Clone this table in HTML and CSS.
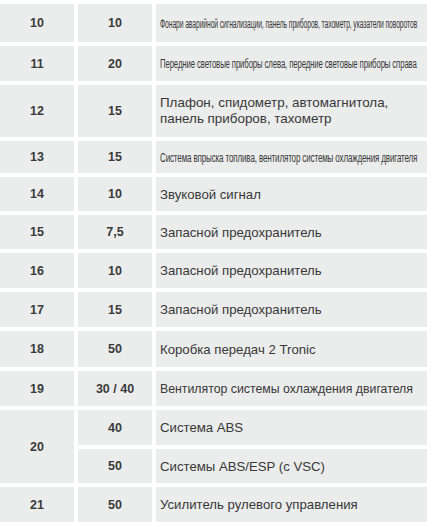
FILE: index.html
```html
<!DOCTYPE html>
<html lang="ru">
<head>
<meta charset="utf-8">
<title>Предохранители</title>
<link rel="stylesheet" href="styles.css">
</head>
<body>
<table class="fuses">
  <colgroup>
    <col class="c-num">
    <col class="c-amp">
    <col class="c-desc">
  </colgroup>
  <tbody>
    <tr class="h38"><td class="num">10</td><td class="num">10</td><td class="desc"><span class="squeeze">Фонари аварийной сигнализации, панель приборов, тахометр, указатели поворотов</span></td></tr>
    <tr class="h35"><td class="num">11</td><td class="num">20</td><td class="desc"><span class="squeeze">Передние световые приборы слева, передние световые приборы справа</span></td></tr>
    <tr class="h52"><td class="num">12</td><td class="num">15</td><td class="desc big">Плафон, спидометр, автомагнитола,<br>панель приборов, тахометр</td></tr>
    <tr class="h32"><td class="num">13</td><td class="num">15</td><td class="desc"><span class="squeeze">Система впрыска топлива, вентилятор системы охлаждения двигателя</span></td></tr>
    <tr class="h34"><td class="num">14</td><td class="num">10</td><td class="desc">Звуковой сигнал</td></tr>
    <tr class="h34"><td class="num">15</td><td class="num">7,5</td><td class="desc">Запасной предохранитель</td></tr>
    <tr class="h35"><td class="num">16</td><td class="num">10</td><td class="desc">Запасной предохранитель</td></tr>
    <tr class="h35"><td class="num">17</td><td class="num">15</td><td class="desc">Запасной предохранитель</td></tr>
    <tr class="h36"><td class="num">18</td><td class="num">50</td><td class="desc">Коробка передач 2 Tronic</td></tr>
    <tr class="h35"><td class="num">19</td><td class="num">30 / 40</td><td class="desc narrow">Вентилятор системы охлаждения двигателя</td></tr>
    <tr class="h35"><td class="num" rowspan="2">20</td><td class="num">40</td><td class="desc">Система ABS</td></tr>
    <tr class="h34"><td class="num">50</td><td class="desc">Системы ABS/ESP (с VSC)</td></tr>
    <tr class="h35"><td class="num">21</td><td class="num">50</td><td class="desc">Усилитель рулевого управления</td></tr>
  </tbody>
</table>
<script src="fit.js"></script>
</body>
</html>
```

FILE: styles.css
```css
html, body {
  margin: 0;
  padding: 0;
  background: #ffffff;
  overflow: hidden;
}

body {
  width: 427px;
  height: 522px;
  font-family: "Liberation Sans", Arial, sans-serif;
  color: #383838;
}

.fuses {
  table-layout: fixed;
  border-collapse: separate;
  border-spacing: 4px;
  width: 440px;
  margin: 0 0 0 -4px;
}

.c-num { width: 74px; }
.c-amp { width: 74px; }

.fuses td {
  background: #ebecec;
  padding: 0;
  vertical-align: middle;
}

.num {
  text-align: center;
  font-weight: bold;
  font-size: 12.5px;
  color: #3a3a3a;
}

.desc {
  font-size: 13.2px;
  padding-left: 4px !important;
  white-space: nowrap;
  overflow: visible;
}

.desc.big {
  font-size: 13.4px;
  line-height: 16px;
}

.desc.narrow {
  font-size: 12.3px;
}

.squeeze {
  display: inline-block;
  font-size: 12px;
  letter-spacing: -0.2px;
  transform-origin: left center;
  transform: scaleX(0.56);
}

.h32 td { height: 32px; }
.h34 td { height: 34px; }
.h35 td { height: 35px; }
.h36 td { height: 36px; }
.h38 td { height: 38px; }
.h52 td { height: 52px; }
```

FILE: fit.js
```js
document.querySelectorAll('.squeeze').forEach(function (el) {
  var target = 257;
  var w = el.scrollWidth;
  if (w > 0) {
    el.style.transform = 'scaleX(' + (target / w).toFixed(4) + ')';
  }
});
```
